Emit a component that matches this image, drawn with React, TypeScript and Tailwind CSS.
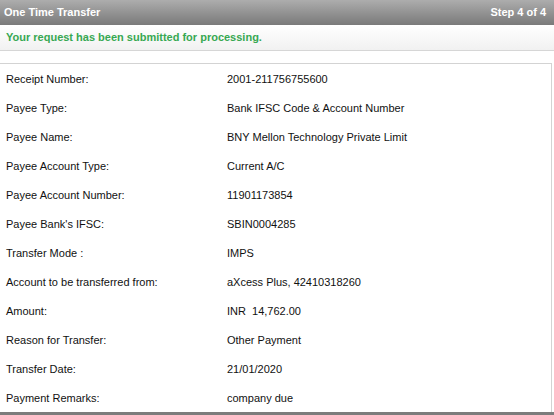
export default function App() {
  const rows: [string, string][] = [
    ["Receipt Number:", "2001-211756755600"],
    ["Payee Type:", "Bank IFSC Code & Account Number"],
    ["Payee Name:", "BNY Mellon Technology Private Limit"],
    ["Payee Account Type:", "Current A/C"],
    ["Payee Account Number:", "11901173854"],
    ["Payee Bank's IFSC:", "SBIN0004285"],
    ["Transfer Mode :", "IMPS"],
    ["Account to be transferred from:", "aXcess Plus, 42410318260"],
    ["Amount:", "INR\u00a0 14,762.00"],
    ["Reason for Transfer:", "Other Payment"],
    ["Transfer Date:", "21/01/2020"],
    ["Payment Remarks:", "company due"],
  ]

  return (
    <div className="w-[554px] h-[415px] overflow-hidden bg-white font-['Liberation_Sans',Arial,sans-serif] text-[11px]">
      {/* Title bar */}
      <div className="h-[25px] flex items-center justify-between px-[4px] bg-gradient-to-b from-[#adadad] to-[#7a7a7a] text-white font-bold">
        <span>One Time Transfer</span>
        <span className="pr-[4px]">Step 4 of 4</span>
      </div>

      {/* Status message */}
      <div className="h-[26px] flex items-center px-[6px] bg-gradient-to-b from-white to-[#f1f1f1] border-b border-[#d6d6d6] text-[#37a852] font-bold">
        Your request has been submitted for processing.
      </div>

      {/* Summary */}
      <div className="mt-[12px] w-[552px] border-t border-r border-[#d3d3d3]">
        {rows.map(([label, value]) => (
          <div key={label} className="h-[29px] flex items-center pt-[1px] text-[#111]">
            <div className="w-[227px] pl-[6px]">{label}</div>
            <div>{value}</div>
          </div>
        ))}
      </div>
      <div className="h-[3px] bg-[#7c7c7c]" />
    </div>
  )
}
